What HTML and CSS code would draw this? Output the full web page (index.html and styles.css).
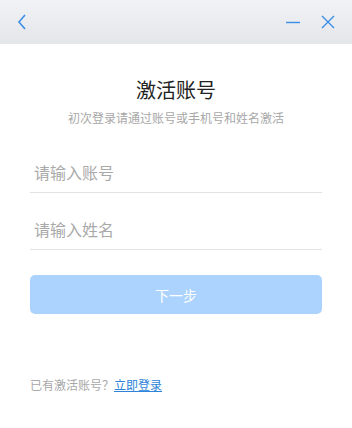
FILE: index.html
```html
<!DOCTYPE html>
<html lang="zh">
<head>
<meta charset="utf-8">
<link rel="stylesheet" href="styles.css">
</head>
<body>
<div class="window">
  <div class="titlebar">
    <svg class="icon back" width="12" height="18" viewBox="0 0 12 18"><path d="M9 2 L3 9 L9 16" fill="none" stroke="#3a8ee6" stroke-width="1.6"/></svg>
    <div class="controls">
      <svg class="icon" width="16" height="16" viewBox="0 0 16 16"><path d="M1 8.5 H15" stroke="#3a8ee6" stroke-width="1.4"/></svg>
      <svg class="icon" width="16" height="16" viewBox="0 0 16 16"><path d="M2 2 L14 14 M14 2 L2 14" stroke="#3a8ee6" stroke-width="1.4"/></svg>
    </div>
  </div>
  <div class="content">
    <h1 class="title">激活账号</h1>
    <p class="subtitle">初次登录请通过账号或手机号和姓名激活</p>
    <div class="fields">
      <div class="field"><input class="input" placeholder="请输入账号"></div>
      <div class="field"><input class="input" placeholder="请输入姓名"></div>
    </div>
    <button class="btn">下一步</button>
    <div class="footer">已有激活账号？<a class="link" href="#">立即登录</a></div>
  </div>
</div>
</body>
</html>
```
FILE: styles.css
```css
* { box-sizing: border-box; }
html, body { margin: 0; padding: 0; background: #fff; }
body { font-family: "Noto Sans CJK SC", "Liberation Sans", sans-serif; }
.window { width: 352px; height: 428px; display: flex; flex-direction: column; }
.titlebar {
  height: 44px;
  background: linear-gradient(#f1f2f4, #e4e6ea);
  display: flex; align-items: center; justify-content: space-between;
  padding: 0 16px 0 16px;
}
.icon { display: block; }
.controls { display: flex; gap: 19px; align-items: center; }
.content { padding: 0 30px; display: flex; flex-direction: column; }
.title { margin: 30px 0 0; font-size: 20px; font-weight: 400; color: #222; text-align: center; line-height: 32px; }
.subtitle { margin: 4px 0 0; font-size: 12px; color: #a8a8a8; text-align: center; line-height: 16px; }
.fields { margin-top: 9px; display: flex; flex-direction: column; }
.field { border-bottom: 1px solid #e3e3e3; height: 57px; display: flex; align-items: flex-end; }
.field:first-child { height: 58px; }
.input {
  border: 0; outline: none; width: 100%; height: 40px; padding: 0 4px;
  font-family: inherit; font-size: 16px; color: #333; background: transparent;
}
.input::placeholder { color: #a9a9a9; }
.btn {
  margin-top: 25px; height: 39px; border: 0; border-radius: 5px;
  background: #acd3fd; color: #fff; font-family: inherit; font-size: 14px;
}
.footer { margin-top: 63px; font-size: 12px; color: #a8a8a8; line-height: 16px; }
.link { color: #2d84d8; text-decoration: underline; }
```
